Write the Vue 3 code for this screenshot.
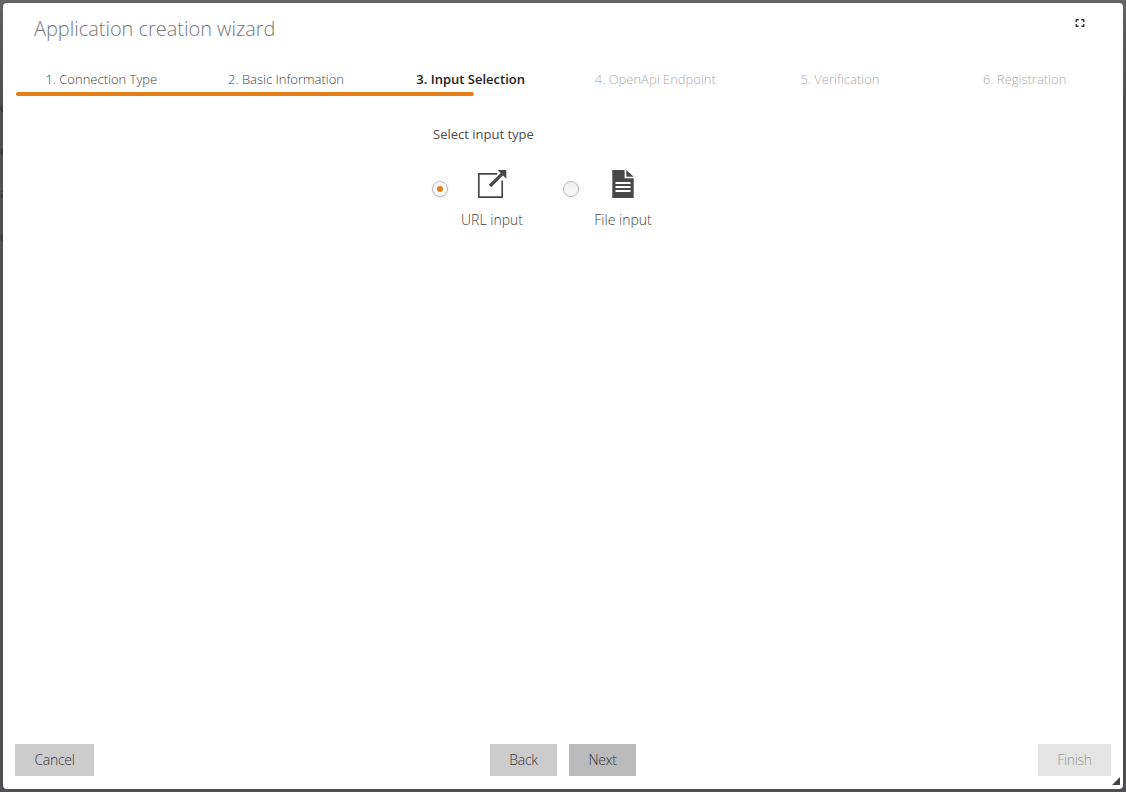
<script setup>
const steps = [
  { label: '1. Connection Type', state: 'done' },
  { label: '2. Basic Information', state: 'done' },
  { label: '3. Input Selection', state: 'current' },
  { label: '4. OpenApi Endpoint', state: 'pending' },
  { label: '5. Verification', state: 'pending' },
  { label: '6. Registration', state: 'pending' },
]
const behind = ['c', 'c', 'a', 'c']
</script>

<template>
  <div class="backdrop">
    <div class="behind"><span v-for="(t, i) in behind" :key="i">{{ t }}</span></div>
    <section class="dialog">
      <header class="head">
        <h1>Application creation wizard</h1>
        <svg class="expand" width="10" height="8" viewBox="0 0 10 8" fill="none" stroke="#3c3c3c" stroke-width="1.4">
          <path d="M1.2 3V.7H3.7M6.3.7H8.8V3M8.8 5V7.3H6.3M3.7 7.3H1.2V5" />
        </svg>
      </header>
      <ol class="steps">
        <li v-for="s in steps" :key="s.label" :class="s.state">{{ s.label }}</li>
      </ol>
      <div class="progress"></div>
      <main>
        <p class="prompt">Select input type</p>
        <div class="options">
          <label class="option">
            <span class="radio checked"></span>
            <span class="choice">
              <svg width="32" height="30" viewBox="0 0 32 30">
                <path d="M21.2 3.8H2.8V27.2H26.2V10.4" fill="none" stroke="#484848" stroke-width="1.7" />
                <path d="M14 16L26.5 3.6" stroke="#484848" stroke-width="3.2" />
                <path d="M21.5 0H30.3V8.8Z" fill="#484848" />
              </svg>
              <span>URL input</span>
            </span>
          </label>
          <label class="option">
            <span class="radio"></span>
            <span class="choice">
              <svg width="32" height="30" viewBox="0 0 32 30">
                <path d="M5.3 0H17.6V8.2H26.7V28H5.3Z" fill="#484848" />
                <path d="M19.4 0L26.7 6.8H19.4Z" fill="#484848" />
                <path d="M8.5 13H23.5M8.5 17H23.5M8.5 21H23.5" stroke="#fff" stroke-width="1.9" />
              </svg>
              <span>File input</span>
            </span>
          </label>
        </div>
      </main>
      <footer>
        <button class="cancel">Cancel</button>
        <div class="nav">
          <button class="back">Back</button>
          <button class="next">Next</button>
        </div>
        <button class="finish" disabled>Finish</button>
      </footer>
      <svg class="grip" width="8" height="8" viewBox="0 0 8 8"><path d="M8 0V8H0Z" fill="#444" /></svg>
    </section>
  </div>
</template>

<style>
body { margin: 0; overflow: hidden; }
</style>

<style scoped>
* { box-sizing: border-box; }
.backdrop {
  position: relative;
  height: 792px;
  padding: 3px;
  background: linear-gradient(#666 0, #5c5c5c 20px, #505052 100px, #505052);
  font-family: "Open Sans", sans-serif;
  font-weight: 300;
  overflow: hidden;
}
.behind {
  position: absolute;
  left: 0;
  top: 98px;
  display: grid;
  grid-auto-rows: 43px;
  font-size: 13px;
  font-weight: 400;
  color: #2e2c30;
}
.dialog {
  position: relative;
  display: flex;
  flex-direction: column;
  height: 786px;
  border-radius: 4px;
  background: #fff;
}
.head {
  display: flex;
  justify-content: space-between;
  align-items: flex-start;
  height: 62px;
  padding: 12px 38px 0 31px;
}
h1 {
  margin: 0;
  font-size: 20px;
  line-height: 28px;
  font-weight: 300;
  letter-spacing: -.03px;
  color: #777;
}
.expand { margin-top: 4px; }
.steps {
  display: grid;
  grid-template-columns: repeat(6, 1fr);
  height: 27px;
  margin: 0;
  padding: 0 6px;
  list-style: none;
  text-align: center;
  font-size: 13px;
  line-height: 28px;
}
.done { color: #444; }
.current { font-weight: 600; color: #222; }
.pending { color: #aaa; }
.progress {
  width: 458px;
  height: 4px;
  margin-left: 13px;
  border-radius: 2px;
  background: #e67e17;
}
main {
  flex: 1;
  padding: 28px 0 0 429px;
}
.prompt {
  margin: 0;
  padding-left: 1px;
  font-size: 13px;
  line-height: 20px;
  font-weight: 400;
  color: #4c4c4c;
}
.options { display: flex; margin-top: 24px; }
.option { display: flex; width: 131px; }
.radio {
  display: grid;
  place-items: center;
  width: 16px;
  height: 16px;
  margin-top: 13px;
  border: 1px solid #bbb;
  border-radius: 50%;
  background: linear-gradient(#eee, #fafafa);
  box-shadow: 0 1px 3px rgba(0, 0, 0, .08);
}
.checked { background: #fafafa; }
.checked::after {
  content: "";
  width: 6px;
  height: 6px;
  border-radius: 50%;
  background: #e67e17;
}
.choice {
  display: flex;
  flex-direction: column;
  align-items: center;
  width: 88px;
  padding-top: 2px;
  font-size: 14px;
  line-height: 20px;
  color: #444;
}
.choice span { margin-top: 10px; }
footer {
  display: grid;
  grid-template-columns: 1fr auto 1fr;
  align-items: start;
  height: 45px;
  padding: 0 12px;
}
.nav { display: flex; gap: 12px; }
button {
  height: 32px;
  padding: 0 0 1px;
  border: 0;
  border-radius: 0;
  background: #ccc;
  color: #333;
  font: 300 14px "Open Sans", sans-serif;
  letter-spacing: -.3px;
}
.cancel { width: 79px; }
.back, .next { width: 67px; }
.next { background: #bbb; }
.finish { width: 73px; justify-self: end; background: #e4e4e4; color: #999; }
.grip { position: absolute; right: 3px; bottom: 4px; }
</style>
